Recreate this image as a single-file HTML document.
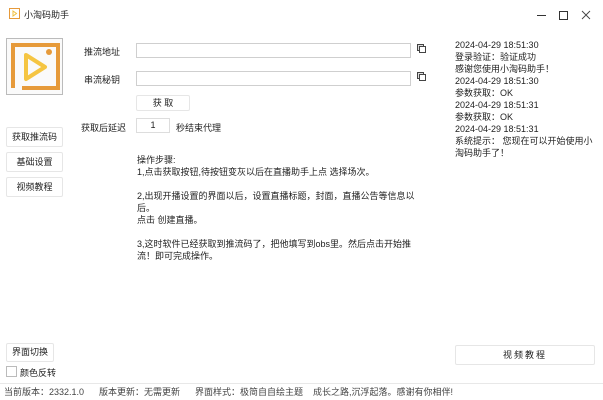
<!DOCTYPE html>
<html><head><meta charset="utf-8"><style>
*{margin:0;padding:0;box-sizing:border-box}
body{width:603px;height:400px;background:#fff;font-family:"Liberation Sans","Noto Sans CJK SC",sans-serif;font-size:9px;color:#222;position:relative;overflow:hidden}
.a{position:absolute;white-space:nowrap}
.btn{position:absolute;border:1px solid #e6e6e6;border-radius:2px;background:#fff;text-align:center}
.inp{position:absolute;border:1px solid #cfcfcf;background:#fff}
.cp{position:absolute;width:9px;height:9px}
</style></head><body>
<svg class="a" style="left:9px;top:8px" width="11" height="11" viewBox="0 0 11 11"><rect x="0.5" y="0.5" width="10" height="10" fill="#fff" stroke="#e69a3a"/><path d="M4 3 L7.5 5.5 L4 8 Z" fill="none" stroke="#f0c040"/></svg>
<div class="a" style="left:24px;top:8px;font-size:9px">小淘码助手</div>
<svg class="a" style="left:535px;top:9px" width="60" height="12" viewBox="0 0 60 12"><path d="M2 6.5 H11" stroke="#333" stroke-width="1"/><rect x="24.5" y="2.5" width="8" height="8" fill="none" stroke="#333"/><path d="M47 2 L55 10 M55 2 L47 10" stroke="#444" stroke-width="0.9"/></svg>

<div class="a" style="left:6px;top:38px;width:57px;height:57px;border:1px solid #bbb;background:#fafafa"></div>
<svg class="a" style="left:8px;top:40px" width="54" height="53" viewBox="0 0 54 53"><path d="M5 48 L5 5 L50 5 L50 48 L14 48" fill="none" stroke="#e69a3a" stroke-width="4"/><circle cx="41" cy="12" r="3" fill="#e69a3a"/><path d="M18 15 L37 27 L18 39 Z" fill="none" stroke="#f5c542" stroke-width="4" stroke-linejoin="round"/></svg>

<div class="a" style="left:84px;top:45px">推流地址</div>
<div class="inp" style="left:136px;top:43px;width:275px;height:15px"></div>
<div class="a" style="left:84px;top:73px">串流秘钥</div>
<div class="inp" style="left:136px;top:71px;width:275px;height:15px"></div>
<svg class="cp" style="left:417px;top:44px" viewBox="0 0 9 9"><rect x="0.5" y="0.5" width="6" height="6" fill="#ddd" stroke="#444"/><rect x="2.5" y="2.5" width="6" height="6" fill="#fff" stroke="#444"/></svg>
<svg class="cp" style="left:417px;top:72px" viewBox="0 0 9 9"><rect x="0.5" y="0.5" width="6" height="6" fill="#ddd" stroke="#444"/><rect x="2.5" y="2.5" width="6" height="6" fill="#fff" stroke="#444"/></svg>
<div class="btn" style="left:136px;top:95px;width:54px;height:16px;line-height:14px">获 取</div>
<div class="a" style="left:81px;top:121px">获取后延迟</div>
<div class="inp" style="left:136px;top:118px;width:34px;height:15px;text-align:center;line-height:13px;border-color:#ddd">1</div>
<div class="a" style="left:176px;top:121px">秒结束代理</div>

<div class="btn" style="left:6px;top:127px;width:57px;height:20px;line-height:18px">获取推流码</div>
<div class="btn" style="left:6px;top:152px;width:57px;height:20px;line-height:18px">基础设置</div>
<div class="btn" style="left:6px;top:177px;width:57px;height:20px;line-height:18px">视频教程</div>

<div class="a" style="left:137px;top:154px;line-height:12px;white-space:normal;width:290px">操作步骤:<br>1,点击获取按钮,待按钮变灰以后在直播助手上点 选择场次。<br><br>2,出现开播设置的界面以后，设置直播标题，封面，直播公告等信息以后。<br>点击 创建直播。<br><br>3,这时软件已经获取到推流码了，把他填写到obs里。然后点击开始推流！即可完成操作。</div>

<div class="a" style="left:455px;top:39px;line-height:12px;white-space:normal;width:140px">2024-04-29 18:51:30<br>登录验证：验证成功<br>感谢您使用小淘码助手！<br>2024-04-29 18:51:30<br>参数获取：OK<br>2024-04-29 18:51:31<br>参数获取：OK<br>2024-04-29 18:51:31<br>系统提示： 您现在可以开始使用小淘码助手了！</div>

<div class="btn" style="left:6px;top:343px;width:48px;height:19px;line-height:17px">界面切换</div>
<div class="a" style="left:6px;top:366px;width:11px;height:11px;border:1px solid #bbb"></div>
<div class="a" style="left:20px;top:366px">颜色反转</div>
<div class="btn" style="left:455px;top:345px;width:140px;height:20px;line-height:18px;letter-spacing:2px">视频教程</div>
<div class="a" style="left:0;top:383px;width:603px;height:1px;background:#e8e8e8"></div>
<div class="a" style="left:4px;top:385px;color:#444">当前版本：2332.1.0&nbsp;&nbsp;&nbsp;&nbsp;&nbsp;&nbsp;版本更新：无需更新&nbsp;&nbsp;&nbsp;&nbsp;&nbsp;&nbsp;界面样式：极简自自绘主题&nbsp;&nbsp;&nbsp;&nbsp;成长之路,沉浮起落。感谢有你相伴!</div>
</body></html>
